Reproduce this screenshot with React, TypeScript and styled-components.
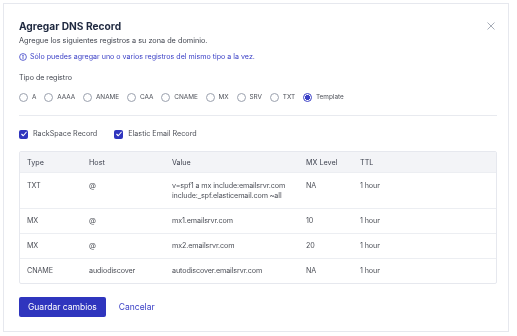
import React from 'react';
import styled, {createGlobalStyle} from 'styled-components';

const GlobalStyle = createGlobalStyle`
    html, body {
        margin: 0;
        padding: 0;
        background: #ffffff;
    }
    body {
        font-family: Inter, "Noto Sans", sans-serif;
        color: #3f4654;
    }
`;

type DnsRow = {
    type: string;
    host: string;
    value: string[];
    mx: string;
    ttl: string;
};

const recordTypes = ['A', 'AAAA', 'ANAME', 'CAA', 'CNAME', 'MX', 'SRV', 'TXT', 'Template'];

const rows: DnsRow[] = [
    {type: 'TXT', host: '@', value: ['v=spf1 a mx include:emailsrvr.com', 'include:_spf.elasticemail.com ~all'], mx: 'NA', ttl: '1 hour'},
    {type: 'MX', host: '@', value: ['mx1.emailsrvr.com'], mx: '10', ttl: '1 hour'},
    {type: 'MX', host: '@', value: ['mx2.emailsrvr.com'], mx: '20', ttl: '1 hour'},
    {type: 'CNAME', host: 'audiodiscover', value: ['autodiscover.emailsrvr.com'], mx: 'NA', ttl: '1 hour'},
];

function InfoIcon() {
    return (
        <svg width="8" height="8" viewBox="0 0 16 16" fill="none" stroke="currentColor" strokeWidth="1.6">
            <circle cx="8" cy="8" r="6.8" />
            <line x1="8" y1="7" x2="8" y2="11.5" strokeLinecap="round" />
            <circle cx="8" cy="4.8" r="0.6" fill="currentColor" />
        </svg>
    );
}

function CheckIcon() {
    return (
        <svg width="8" height="8" viewBox="0 0 16 16" fill="none" stroke="#ffffff" strokeWidth="2.2" strokeLinecap="round" strokeLinejoin="round">
            <polyline points="3.5,8.5 6.5,11.5 12.5,4.5" />
        </svg>
    );
}

export default function App() {
    return (
        <>
            <GlobalStyle />
            <StyledPage>
                <StyledCard>
                    <StyledHeader>
                        <StyledTitle>Agregar DNS Record</StyledTitle>
                        <StyledClose aria-label="Cerrar">
                            <svg width="8" height="8" viewBox="0 0 10 10" stroke="#9aa0ad" strokeWidth="1.1" strokeLinecap="round">
                                <line x1="1" y1="1" x2="9" y2="9" />
                                <line x1="9" y1="1" x2="1" y2="9" />
                            </svg>
                        </StyledClose>
                    </StyledHeader>
                    <StyledSubtitle>Agregue los siguientes registros a su zona de dominio.</StyledSubtitle>
                    <StyledInfo>
                        <InfoIcon />
                        Sólo puedes agregar uno o varios registros del mismo tipo a la vez.
                    </StyledInfo>

                    <StyledLabel>Tipo de registro</StyledLabel>
                    <StyledRadioGroup>
                        {recordTypes.map((type) => (
                            <StyledRadioItem key={type}>
                                <StyledRadio $checked={type === 'Template'} />
                                {type}
                            </StyledRadioItem>
                        ))}
                    </StyledRadioGroup>

                    <StyledDivider />

                    <StyledCheckGroup>
                        <StyledCheckItem>
                            <StyledCheckbox><CheckIcon /></StyledCheckbox>
                            RackSpace Record
                        </StyledCheckItem>
                        <StyledCheckItem>
                            <StyledCheckbox><CheckIcon /></StyledCheckbox>
                            Elastic Email Record
                        </StyledCheckItem>
                    </StyledCheckGroup>

                    <StyledTable>
                        <StyledHeadRow>
                            <span>Type</span>
                            <span>Host</span>
                            <span>Value</span>
                            <span>MX Level</span>
                            <span>TTL</span>
                        </StyledHeadRow>
                        {rows.map((row, index) => (
                            <StyledRow key={`dns-row-${index}`} $tall={row.value.length > 1}>
                                <span>{row.type}</span>
                                <span>{row.host}</span>
                                <StyledValue>
                                    {row.value.map((line) => (
                                        <span key={line}>{line}</span>
                                    ))}
                                </StyledValue>
                                <span>{row.mx}</span>
                                <span>{row.ttl}</span>
                            </StyledRow>
                        ))}
                    </StyledTable>

                    <StyledActions>
                        <StyledPrimaryButton type="button">Guardar cambios</StyledPrimaryButton>
                        <StyledLinkButton type="button">Cancelar</StyledLinkButton>
                    </StyledActions>
                </StyledCard>
            </StyledPage>
        </>
    );
}

const StyledPage = styled.div`
    width: 517px;
    height: 336px;
    padding: 3px 8px 4px 3px;
    box-sizing: border-box;
`;

// will-change keeps the tiny text on grayscale antialiasing (no colour fringes)
const StyledCard = styled.div`
    width: 506px;
    height: 329px;
    box-sizing: border-box;
    border: 1px solid #e6e8ee;
    padding: 15px 12px 0 15px;
    display: flex;
    flex-direction: column;
    will-change: transform;
`;

const StyledHeader = styled.div`
    display: flex;
    align-items: center;
    justify-content: space-between;
`;

const StyledTitle = styled.h1`
    margin: 0;
    font-size: 10.2px;
    line-height: 14px;
    font-weight: 700;
    color: #1f2940;
`;

const StyledClose = styled.button`
    border: none;
    background: none;
    padding: 0;
    margin-right: 1px;
    display: flex;
    cursor: pointer;
`;

const StyledSubtitle = styled.p`
    margin: 3px 0 0;
    font-size: 7.3px;
    line-height: 10px;
    color: #41454f;
`;

const StyledInfo = styled.p`
    margin: 6px 0 0;
    display: flex;
    align-items: center;
    gap: 3px;
    font-size: 7.1px;
    line-height: 10px;
    color: #3b40c6;
`;

const StyledLabel = styled.p`
    margin: 11px 0 0;
    font-size: 7.1px;
    line-height: 10px;
    color: #41454f;
`;

const StyledRadioGroup = styled.div`
    margin-top: 9px;
    display: flex;
    align-items: center;
    gap: 7.8px;
`;

const StyledRadioItem = styled.label`
    display: flex;
    align-items: center;
    gap: 4px;
    font-size: 6.4px;
    line-height: 10px;
    color: #4d5058;
`;

const StyledRadio = styled.span<{$checked: boolean}>`
    width: 9px;
    height: 9px;
    border-radius: 50%;
    box-sizing: border-box;
    border: 1px solid ${(p) => (p.$checked ? '#3b40c6' : '#9aa0ad')};
    background: ${(p) => (p.$checked ? 'radial-gradient(circle, #3b40c6 0 2.6px, #ffffff 2.8px)' : '#ffffff')};
`;

const StyledDivider = styled.hr`
    margin: 13px 0 0;
    width: 478px;
    border: none;
    border-top: 1px solid #e8eaef;
`;

const StyledCheckGroup = styled.div`
    margin-top: 13px;
    display: flex;
    align-items: center;
    gap: 17px;
`;

const StyledCheckItem = styled.label`
    display: flex;
    align-items: center;
    gap: 5px;
    font-size: 7.2px;
    line-height: 10px;
    color: #4d5058;
`;

const StyledCheckbox = styled.span`
    width: 9px;
    height: 9px;
    border-radius: 2px;
    background: #2f35be;
    display: flex;
    align-items: center;
    justify-content: center;
`;

const StyledTable = styled.div`
    margin-top: 12px;
    width: 478px;
    border: 1px solid #e6e8ee;
    border-radius: 2px;
    box-sizing: border-box;
`;

const StyledHeadRow = styled.div`
    display: grid;
    grid-template-columns: 62px 83px 134px 54px 1fr;
    align-items: center;
    height: 20px;
    padding-left: 7px;
    background: #f3f4f7;
    font-size: 7.2px;
    color: #3f4350;
`;

const StyledRow = styled.div<{$tall: boolean}>`
    display: grid;
    grid-template-columns: 62px 83px 134px 54px 1fr;
    align-items: ${(p) => (p.$tall ? 'start' : 'center')};
    height: ${(p) => (p.$tall ? '36px' : '25px')};
    padding: ${(p) => (p.$tall ? '8px 0 0 7px' : '0 0 0 7px')};
    box-sizing: border-box;
    border-top: 1px solid #eceef2;
    font-size: 7.2px;
    letter-spacing: -0.12px;
    line-height: 10px;
    color: #4d5058;
`;

const StyledValue = styled.span`
    display: flex;
    flex-direction: column;
`;

const StyledActions = styled.div`
    margin-top: 13px;
    display: flex;
    align-items: center;
    gap: 13px;
`;

const StyledPrimaryButton = styled.button`
    height: 20px;
    padding: 0 9px;
    border: none;
    border-radius: 2px;
    background: #2f35be;
    color: #ffffff;
    font-family: inherit;
    font-size: 8.5px;
    cursor: pointer;
`;

const StyledLinkButton = styled.button`
    border: none;
    background: none;
    padding: 0;
    color: #3b40c6;
    font-family: inherit;
    font-size: 8.5px;
    cursor: pointer;
`;
